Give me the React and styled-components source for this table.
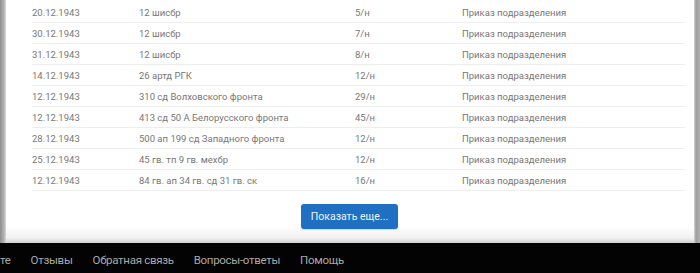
import React from "react";
import styled, { createGlobalStyle } from "styled-components";

const Global = createGlobalStyle`
  html, body { margin: 0; padding: 0; background: #000; }
  body { width: 700px; height: 273px; overflow: hidden; font-family: Roboto, "Liberation Sans", sans-serif; }
`;

const Page = styled.div`
  display: flex;
  flex-direction: column;
  width: 700px;
  height: 273px;
`;

const Frame = styled.div`
  display: flex;
  background: linear-gradient(90deg, #8e8e8e 0px, #b4b4b4 4px, #d8d8d8 6px);
  padding: 0 6px 0 6px;
  background-color: #a8a8a8;
  height: 243px;
  box-sizing: border-box;
  position: relative;
  &::after {
    content: "";
    position: absolute;
    right: 0;
    top: 0;
    bottom: 0;
    width: 6px;
    background: linear-gradient(90deg, #d8d8d8, #9c9c9c 2px, #b0b0b0);
  }
`;

const Panel = styled.div`
  flex: 1;
  background: linear-gradient(180deg, #fff 0, #fff 226px, #f1f1f1 238px, #d0d0d0 243px);
  padding: 2px 9px 0 26px;
  display: flex;
  flex-direction: column;
`;

const Row = styled.div`
  display: grid;
  grid-template-columns: 107px 216px 107px 1fr;
  height: 21px;
  align-items: center;
  border-bottom: 1px solid #eeeeee;
  box-sizing: border-box;
  font-size: 9.5px;
  color: #777;
`;

const Cell = styled.span`
  white-space: nowrap;
`;

const ButtonBar = styled.div`
  display: flex;
  justify-content: center;
  padding-top: 13px;
  padding-right: 18px;
`;

const MoreButton = styled.button`
  width: 97px;
  height: 25px;
  border: none;
  border-radius: 3px;
  background: #1f6fc2;
  color: #eef4fb;
  font-family: Roboto, "Liberation Sans", sans-serif;
  font-size: 10.5px;
  padding: 0;
  box-shadow: 0 1px 1px rgba(0,0,0,0.15);
`;

const Footer = styled.div`
  flex: 1;
  background: #030303;
  display: flex;
  align-items: center;
  gap: 20px;
  padding-top: 4px;
`;

const FootLink = styled.span`
  color: #a9a9a9;
  font-family: "Roboto", "Liberation Sans", sans-serif;
  font-size: 11.5px;
  letter-spacing: -0.3px;
  white-space: nowrap;
`;

const rows = [
  ["20.12.1943", "12 шисбр", "5/н", "Приказ подразделения"],
  ["30.12.1943", "12 шисбр", "7/н", "Приказ подразделения"],
  ["31.12.1943", "12 шисбр", "8/н", "Приказ подразделения"],
  ["14.12.1943", "26 артд РГК", "12/н", "Приказ подразделения"],
  ["12.12.1943", "310 сд Волховского фронта", "29/н", "Приказ подразделения"],
  ["12.12.1943", "413 сд 50 А Белорусского фронта", "45/н", "Приказ подразделения"],
  ["28.12.1943", "500 ап 199 сд Западного фронта", "12/н", "Приказ подразделения"],
  ["25.12.1943", "45 гв. тп 9 гв. мехбр", "12/н", "Приказ подразделения"],
  ["12.12.1943", "84 гв. ап 34 гв. сд 31 гв. ск", "16/н", "Приказ подразделения"],
];

export default function App() {
  return (
    <Page>
      <Global />
      <Frame>
        <Panel>
          {rows.map((r, i) => (
            <Row key={i}>
              {r.map((c, j) => <Cell key={j}>{c}</Cell>)}
            </Row>
          ))}
          <ButtonBar>
            <MoreButton>Показать еще...</MoreButton>
          </ButtonBar>
        </Panel>
      </Frame>
      <Footer>
        <FootLink>те</FootLink>
        <FootLink>Отзывы</FootLink>
        <FootLink>Обратная связь</FootLink>
        <FootLink>Вопросы-ответы</FootLink>
        <FootLink>Помощь</FootLink>
      </Footer>
    </Page>
  );
}
